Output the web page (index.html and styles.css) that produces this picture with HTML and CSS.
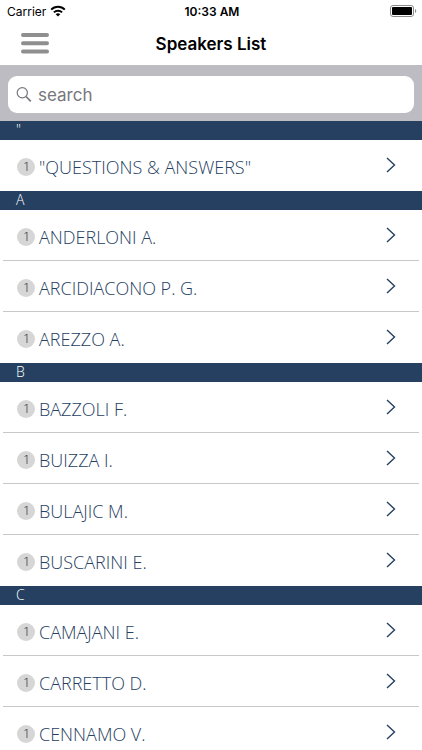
FILE: index.html
```html
<!DOCTYPE html>
<html lang="en">
<head>
  <meta charset="UTF-8">
  <meta name="viewport" content="width=device-width, initial-scale=1.0">
  <title>Speakers List</title>
  <link rel="stylesheet" href="styles.css">
</head>
<body>
  <div class="status-bar">
    <div class="carrier">
      <span>Carrier</span>
      <svg class="wifi" width="16" height="12" viewBox="0 0 16 12" fill="none" stroke="#000" stroke-width="2">
        <path d="M1.2 4.6a9.6 9.6 0 0 1 13.6 0"/>
        <path d="M3.9 7.4a5.8 5.8 0 0 1 8.2 0"/>
        <path d="M8 11.6L5.7 9.3a3.3 3.3 0 0 1 4.6 0z" fill="#000" stroke="none"/>
      </svg>
    </div>
    <span class="clock">10:33 AM</span>
    <div class="battery">
      <svg width="27" height="12" viewBox="0 0 27 12">
        <rect x="0.5" y="0.5" width="23" height="11" rx="2.5" fill="none" stroke="#8a8a8a"/>
        <rect x="2" y="2" width="20" height="8" rx="1" fill="#000"/>
        <path d="M25 4v4a2.2 2.2 0 0 0 0-4z" fill="#8a8a8a"/>
      </svg>
    </div>
  </div>

  <header class="nav-bar">
    <button class="menu-button" type="button" aria-label="Menu">
      <svg width="30" height="22" viewBox="0 0 30 22" stroke="#8f8f8f" stroke-width="4" stroke-linecap="round">
        <path d="M3 2h24M3 10.2h24M3 18.4h24"/>
      </svg>
    </button>
    <h1>Speakers List</h1>
  </header>

  <form class="search-bar">
    <label class="search-field">
      <svg width="16" height="16" viewBox="0 0 16 16" fill="none" stroke="#77777c" stroke-width="1.2">
        <circle cx="6.3" cy="5.8" r="5.1"/>
        <path d="M10 9.5l4.8 4.8" stroke-width="1.7"/>
      </svg>
      <input type="search" placeholder="search" aria-label="search">
    </label>
  </form>

  <main id="speakers"></main>

  <script>
    const groups = [
      { letter: '"', names: ['"QUESTIONS & ANSWERS"'] },
      { letter: "A", names: ["ANDERLONI A.", "ARCIDIACONO P. G.", "AREZZO A."] },
      { letter: "B", names: ["BAZZOLI F.", "BUIZZA I.", "BULAJIC M.", "BUSCARINI E."] },
      { letter: "C", names: ["CAMAJANI E.", "CARRETTO D.", "CENNAMO V."] }
    ];

    const chevron = '<svg class="chevron" width="10" height="16" viewBox="0 0 10 16" fill="none" stroke="#254061" stroke-width="1.4"><path d="M1 1l7.5 7L1 15"/></svg>';
    const main = document.getElementById("speakers");

    // One heading and one list for each letter
    groups.forEach(group => {
      const title = document.createElement("h2");
      title.className = "section-title";
      title.textContent = group.letter;

      const list = document.createElement("ul");
      list.className = "speaker-list";

      group.names.forEach(name => {
        const item = document.createElement("li");
        item.innerHTML = `<a class="speaker" href="#"><span class="badge">1</span><span class="name"></span>${chevron}</a>`;
        item.querySelector(".name").textContent = name;
        list.appendChild(item);
      });

      main.append(title, list);
    });
  </script>
</body>
</html>
```

FILE: styles.css
```css
* {
  margin: 0;
  padding: 0;
  box-sizing: border-box;
}

body {
  font-family: "Open Sans", sans-serif;
  background-color: #fff;
  color: #254061;
}

svg {
  display: block;
  flex-shrink: 0;
}

/* Status bar */
.status-bar {
  display: grid;
  grid-template-columns: 1fr auto 1fr;
  align-items: center;
  height: 22px;
  padding: 0 5px 0 7px;
  font-family: Inter, sans-serif;
  font-size: 12px;
  color: #000;
}

.carrier {
  display: flex;
  align-items: center;
  gap: 4px;
}

.clock {
  font-weight: 600;
}

.battery {
  justify-self: end;
}

/* Navigation bar */
.nav-bar {
  display: grid;
  grid-template-columns: 50px 1fr 50px;
  align-items: center;
  height: 43px;
}

.menu-button {
  padding-left: 20px;
  border: none;
  background: none;
}

.nav-bar h1 {
  font-family: Inter, sans-serif;
  font-size: 17px;
  font-weight: 600;
  text-align: center;
  color: #000;
}

/* Search */
.search-bar {
  padding: 11px 8px 8px;
  background-color: #bdbcc2;
}

.search-field {
  display: flex;
  align-items: center;
  gap: 6px;
  height: 37px;
  padding: 0 8px;
  border-radius: 9px;
  background-color: #fff;
}

.search-field input {
  flex: 1;
  min-width: 0;
  border: none;
  outline: none;
  background: none;
  font-family: Inter, sans-serif;
  font-size: 17px;
  appearance: none;
}

.search-field input::placeholder {
  color: #77777c;
}

/* Speakers */
.section-title {
  height: 19px;
  padding-left: 16px;
  background-color: #254061;
  font-size: 14px;
  font-weight: 300;
  line-height: 18px;
  color: #fff;
}

.speaker-list {
  list-style: none;
}

.speaker-list li {
  padding: 0 3px;
}

.speaker {
  display: flex;
  align-items: center;
  gap: 4px;
  height: 51px;
  padding: 0 23px 0 14px;
  border-bottom: 1px solid #c8c8cb;
  text-decoration: none;
  color: #254061;
}

.speaker-list li:last-child .speaker {
  border-bottom-color: transparent;
}

.badge {
  width: 18px;
  height: 18px;
  margin-top: 4px;
  border-radius: 50%;
  background-color: #d6d6d6;
  font-family: Inter, sans-serif;
  font-size: 12px;
  font-weight: 300;
  line-height: 18px;
  text-align: center;
  color: #4a4f57;
}

.name {
  flex: 1;
  padding-top: 4px;
  font-size: 18px;
  font-weight: 300;
  line-height: 24px;
}
```
